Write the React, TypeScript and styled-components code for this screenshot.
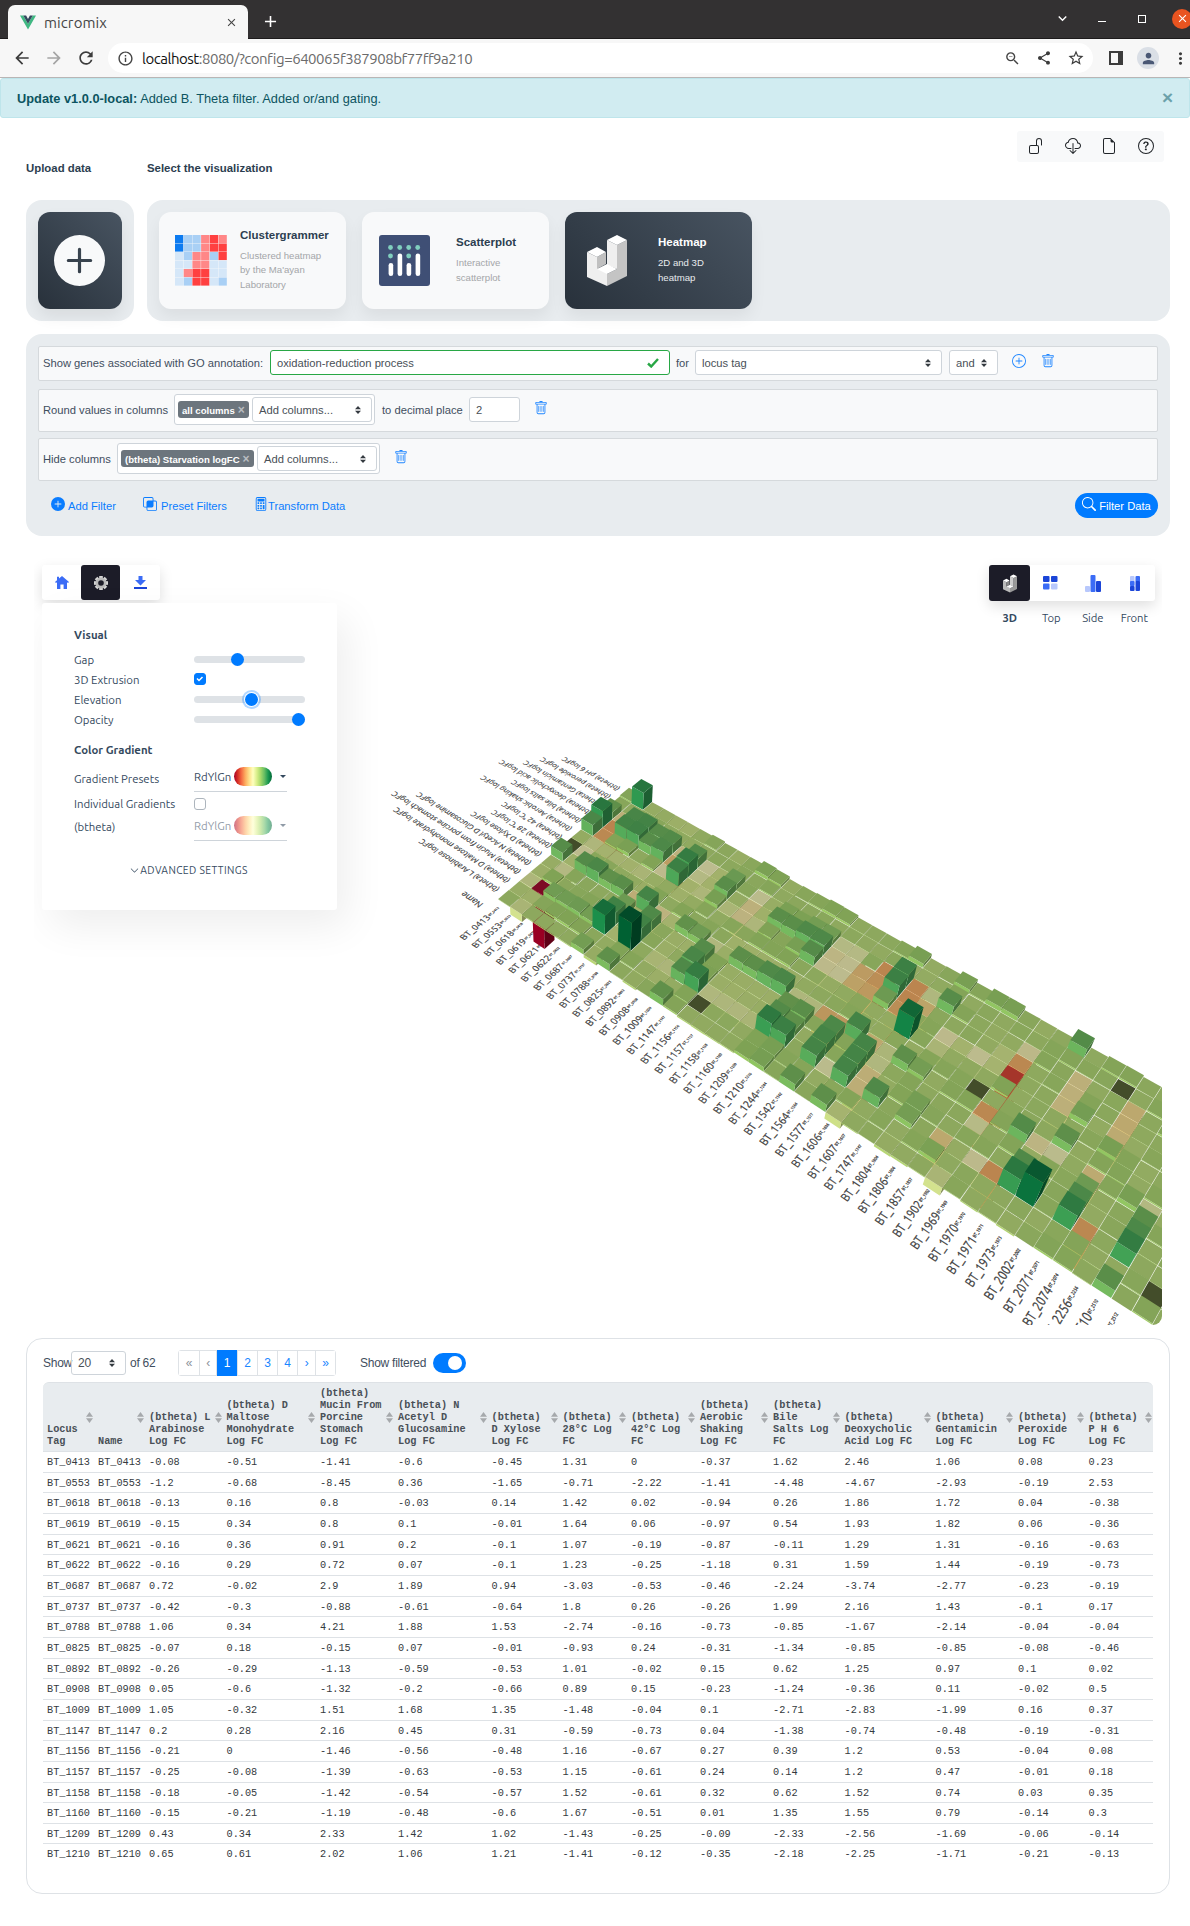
import React from 'react';
import styled, { createGlobalStyle, css } from 'styled-components';
import {
  BsPlusCircleFill, BsPlusCircle, BsUnlock, BsCloudDownload, BsFileEarmark, BsQuestionCircle,
  BsIntersect, BsCalculator, BsSearch, BsTrash, BsChevronDown,
} from 'react-icons/bs';
import {
  MdArrowBack, MdArrowForward, MdRefresh, MdInfoOutline, MdZoomOut, MdShare, MdStarOutline, MdPerson,
  MdMoreVert, MdAdd, MdClose, MdKeyboardArrowDown,
} from 'react-icons/md';

const sans = '"Liberation Sans", Arial, sans-serif';
const ui = 'Ubuntu, "Noto Sans", sans-serif';
const mono = '"Liberation Mono", monospace';

const GlobalStyle = createGlobalStyle`
  * { box-sizing: border-box; }
  body { margin: 0; background: #fff; font-family: ${sans}; font-size: 11.2px; color: #2c3e50; }
`;

const Page = styled.div`
  width: 1190px;
  height: 1926px;
  overflow: hidden;
`;

/* ---------- browser window ---------- */

const TabStrip = styled.div`
  height: 39px;
  background: #333132;
  border-bottom: 1px solid #1d1b1c;
  display: flex;
  align-items: flex-end;
  padding-left: 8px;
`;

const Tab = styled.div`
  width: 240px;
  height: 34px;
  margin-bottom: -1px;
  background: #f7f7f7;
  border-radius: 7px 7px 0 0;
  display: flex;
  align-items: center;
  padding: 0 10px 0 12px;
  color: #454545;
`;

const TabTitle = styled.span`
  font: 15px ${ui};
  letter-spacing: 0.1px;
  margin-left: 8px;
  flex: 1;
`;

const NewTab = styled.div`
  width: 24px;
  height: 34px;
  margin-left: 10px;
  color: #fff;
  display: flex;
  align-items: center;
  justify-content: center;
`;

const WindowButtons = styled.div`
  margin-left: auto;
  height: 39px;
  display: flex;
  align-items: center;
  color: #fff;
`;

const Minimize = styled.i`
  width: 8px;
  height: 1px;
  background: #fff;
  margin: 5px 0 0 27px;
`;

const Maximize = styled.i`
  width: 8px;
  height: 8px;
  border: 1px solid #fff;
  margin-left: 32px;
`;

const CloseWindow = styled.div`
  width: 20px;
  height: 20px;
  border-radius: 50%;
  background: #e95420;
  margin: 0 -2px 0 26px;
  display: flex;
  align-items: center;
  justify-content: center;
`;

const Toolbar = styled.div`
  height: 39px;
  background: #f7f7f7;
  border-bottom: 1px solid #b9b5b5;
  display: flex;
  align-items: center;
  color: #3c3c3c;
  padding-left: 12px;
`;

const NavIcon = styled.span<{ $muted?: boolean; $gap?: number }>`
  display: flex;
  margin-left: ${p => p.$gap ?? 0}px;
  color: ${p => (p.$muted ? '#a5a5a5' : '#3c3c3c')};
`;

const Omnibox = styled.div`
  width: 989px;
  height: 30px;
  margin-left: 12px;
  border-radius: 15px;
  background: #fff;
  display: flex;
  align-items: center;
  padding: 0 8px 0 9px;
  color: #444;
`;

const Url = styled.span`
  font: 15px ${ui};
  letter-spacing: -0.48px;
  color: #6b6b6b;
  margin-left: 8px;
  flex: 1;
  b { font-weight: 400; color: #111; }
`;

const Avatar = styled.div`
  width: 22px;
  height: 22px;
  border-radius: 50%;
  background: #dadfe6;
  color: #4a5875;
  display: flex;
  align-items: center;
  justify-content: center;
  margin-left: 14px;
`;

/* ---------- notice and header ---------- */

const Alert = styled.div`
  height: 40px;
  background: #d1ecf1;
  border: 1px solid #bee5eb;
  border-radius: 3px;
  color: #0c5460;
  font-size: 12.8px;
  display: flex;
  align-items: center;
  padding: 0 16px 0 16px;
  b { margin-right: 3px; }
`;

const Dismiss = styled.span`
  margin-left: auto;
  font-size: 19px;
  font-weight: 700;
  color: #6ba1aa;
`;

const Header = styled.div`
  display: grid;
  grid-template-columns: 121px 1fr auto;
  padding: 13px 26px 0;
  height: 82px;
`;

const HeaderLabel = styled.div`
  font-weight: 700;
  font-size: 11.4px;
  padding-top: 31px;
`;

const IconBar = styled.div`
  width: 147px;
  height: 31px;
  background: #f8f9fa;
  border-radius: 3px;
  display: flex;
  align-items: center;
  justify-content: space-between;
  color: #212529;
  padding: 0 10px 2px 11px;
`;

const Panels = styled.div`
  display: flex;
  gap: 13px;
  padding: 0 20px 0 26px;
`;

const Panel = styled.div<{ $w: number }>`
  width: ${p => p.$w}px;
  height: 121px;
  border-radius: 16px;
  background: #e8ecef;
  display: flex;
  gap: 16px;
  padding: 12px;
`;

const dark = css`
  background: linear-gradient(45deg, #28313b 0%, #485461 100%);
  color: #f8f9fa;
`;

const UploadButton = styled.div`
  ${dark}
  width: 84px;
  height: 97px;
  border-radius: 12px;
  box-shadow: 0 8px 16px rgba(0, 0, 0, 0.07);
  display: flex;
  align-items: center;
  justify-content: center;
  padding-right: 2px;
`;

const Card = styled.div<{ $dark?: boolean }>`
  width: 187px;
  height: 97px;
  border-radius: 12px;
  background: #f8f9fa;
  box-shadow: 0 8px 16px rgba(0, 0, 0, 0.06);
  display: grid;
  grid-template-columns: 52px 1fr;
  align-items: center;
  padding: 0 0 0 16px;
  ${p => p.$dark && dark}
`;

const CardText = styled.div<{ $pad: number }>`
  padding-left: ${p => p.$pad}px;
`;

const CardTitle = styled.div<{ $dark?: boolean }>`
  font-weight: 700;
  font-size: 11.5px;
  margin: 0 0 8px;
  color: ${p => (p.$dark ? '#fff' : '#2c3e50')};
`;

const CardSub = styled.div<{ $dark?: boolean }>`
  font-size: 9.6px;
  line-height: 14.4px;
  color: ${p => (p.$dark ? '#e8ebee' : '#a4a6a9')};
`;

/* ---------- filters ---------- */

const Filters = styled.div`
  margin: 13px 20px 0 26px;
  height: 202px;
  border-radius: 16px;
  background: #e8ecef;
  padding: 12px 12px 0;
`;

const FilterRow = styled.div<{ $h: number; $gap: number }>`
  height: ${p => p.$h}px;
  margin-bottom: ${p => p.$gap}px;
  background: #f8f9fa;
  border: 1px solid #d5d9dc;
  border-radius: 2px;
  display: flex;
  align-items: center;
  padding: 0 0 2px 4px;
  font-size: 11.2px;
  color: #3f4e5e;
`;

const Field = styled.div<{ $w: number; $ml?: number; $ok?: boolean }>`
  width: ${p => p.$w}px;
  height: 25px;
  margin-left: ${p => p.$ml ?? 0}px;
  border: 1px solid ${p => (p.$ok ? '#28a745' : '#ced4da')};
  border-radius: 3px;
  background: #fff;
  color: #495057;
  display: flex;
  align-items: center;
  justify-content: space-between;
  padding: 0 10px 0 6px;
`;

const TagBox = styled.div<{ $w: number; $ml: number }>`
  width: ${p => p.$w}px;
  height: 31px;
  margin-left: ${p => p.$ml}px;
  border: 1px solid #ced4da;
  border-radius: 3px;
  background: #fff;
  display: flex;
  align-items: center;
  justify-content: space-between;
  padding: 0 2px 0 3px;
`;

const Tag = styled.span`
  height: 17px;
  border-radius: 3px;
  background: #6c757d;
  color: #fff;
  font-weight: 700;
  font-size: 9.6px;
  display: flex;
  align-items: center;
  gap: 3px;
  padding: 1px 4px 0;
  white-space: nowrap;
  i { font-style: normal; font-size: 12px; line-height: 8px; color: #b9bdc1; margin-top: -1px; }
`;

const Label = styled.span<{ $w: number; $ml?: number }>`
  width: ${p => p.$w}px;
  margin-left: ${p => p.$ml ?? 0}px;
  white-space: nowrap;
`;

const BlueIcon = styled.span<{ $ml: number }>`
  margin: 0 0 3px ${p => p.$ml}px;
  display: flex;
  color: #1f86ff;
`;

const Actions = styled.div`
  display: flex;
  align-items: center;
  height: 25px;
  margin-top: 12px;
  padding-left: 13px;
  color: #0a7cff;
`;

const Action = styled.div<{ $w: number; $gap: number }>`
  width: ${p => p.$w}px;
  display: flex;
  align-items: center;
  gap: ${p => p.$gap}px;
  svg { margin-bottom: 3px; }
`;

const FilterButton = styled.div`
  margin-left: auto;
  width: 83px;
  height: 25px;
  border-radius: 13px;
  background: #007bff;
  color: #fff;
  display: flex;
  align-items: center;
  justify-content: center;
  gap: 3px;
  svg { margin-bottom: 3px; }
`;

/* ---------- 3D view ---------- */

const View = styled.div`
  position: relative;
  margin: 14px 28px 0 34px;
  height: 775px;
  overflow: hidden;
  border-radius: 0 0 9px 0;
`;

const Scene = styled.svg`
  position: absolute;
  inset: 0;
  display: block;
`;

const ViewTop = styled.div`
  position: relative;
  display: flex;
  justify-content: space-between;
  padding: 15px 7px 0 8px;
`;

const ButtonGroup = styled.div`
  display: flex;
  background: #fff;
  border-radius: 3px;
  box-shadow: 0 5px 14px rgba(0, 0, 0, 0.13);
`;

const GroupButton = styled.div<{ $w: number; $h: number; $on?: boolean }>`
  width: ${p => p.$w}px;
  height: ${p => p.$h}px;
  border-radius: 3px;
  background: ${p => (p.$on ? '#1c1c28' : 'transparent')};
  display: flex;
  align-items: center;
  justify-content: center;
`;

const ViewNames = styled.div`
  display: flex;
  margin-top: 10px;
  font: 11.3px ${ui};
  letter-spacing: -0.1px;
  color: #34495e;
  span, b { width: 41.5px; text-align: center; }
`;

const Settings = styled.div`
  position: relative;
  width: 295px;
  height: 307px;
  margin: -21px 0 0 8px;
  background: #fff;
  border-radius: 3px;
  box-shadow: 10px 16px 40px rgba(0, 0, 0, 0.07);
  padding: 22px 32px 0;
  font: 11.4px ${ui};
  letter-spacing: 0;
  color: #34495e;
`;

const SettingsTitle = styled.div<{ $mt?: number }>`
  font-weight: 700;
  height: 20px;
  line-height: 20px;
  margin: ${p => p.$mt ?? 0}px 0 4px;
`;

const SettingsRow = styled.div<{ $h: number; $lift?: number }>`
  height: ${p => p.$h}px;
  display: grid;
  grid-template-columns: 120px 111px;
  align-items: center;
  > :first-child { padding-bottom: ${p => p.$lift ?? 0}px; }
`;

const Track = styled.div`
  position: relative;
  height: 7px;
  border-radius: 4px;
  background: #dee2e6;
`;

const Thumb = styled.i<{ $x: number; $focus?: boolean }>`
  position: absolute;
  top: -3px;
  left: ${p => p.$x}px;
  width: 13px;
  height: 13px;
  border-radius: 50%;
  background: #007bff;
  ${p => p.$focus && 'box-shadow: 0 0 0 1px #fff, 0 0 0 3px rgba(0,123,255,.3);'}
`;

const Check = styled.div<{ $on?: boolean }>`
  width: 12px;
  height: 12px;
  border-radius: 3px;
  border: 1px solid ${p => (p.$on ? '#007bff' : '#adb5bd')};
  background: ${p => (p.$on ? '#007bff' : '#fff')};
  display: flex;
`;

const Gradient = styled.div<{ $dim?: boolean }>`
  width: 93px;
  height: 25px;
  border-bottom: 1px solid #ced4da;
  display: flex;
  align-items: center;
  padding-bottom: 4px;
  > * { opacity: ${p => (p.$dim ? 0.55 : 1)}; }
`;

const Pill = styled.i`
  width: 38px;
  height: 19px;
  border-radius: 10px;
  margin: 0 8px 0 3px;
  background: linear-gradient(90deg, #a50026, #d73027, #f46d43, #fdae61, #fee08b, #ffffbf, #d9ef8b, #a6d96a, #66bd63, #1a9850, #006837);
`;

const Caret = styled.i`
  border: 3px solid transparent;
  border-top-color: #34495e;
  border-bottom: 0;
`;

const Advanced = styled.div`
  display: flex;
  align-items: center;
  justify-content: center;
  gap: 1px;
  margin: 21px 0 0 -1px;
  font-size: 10.3px;
  letter-spacing: 0.4px;
`;

/* ---------- table ---------- */

const TablePanel = styled.div`
  margin: 13px 20px 0 26px;
  height: 556px;
  border: 1px solid #dee2e6;
  border-radius: 16px;
  padding: 11px 16px 0;
`;

const TableTools = styled.div`
  display: flex;
  align-items: center;
  height: 26px;
  margin-bottom: 6px;
  font-size: 12px;
  letter-spacing: -0.25px;
  color: #3f4e5e;
`;

const PageSize = styled.div`
  width: 55px;
  height: 24px;
  border: 1px solid #ced4da;
  border-radius: 3px;
  display: flex;
  align-items: center;
  justify-content: space-between;
  padding: 0 10px 0 6px;
  color: #495057;
`;

const Pager = styled.div`
  display: flex;
  margin-left: 24px;
  border: 1px solid #dee2e6;
  border-radius: 3px;
  height: 26px;
`;

const PageItem = styled.span<{ $w: number; $on?: boolean; $muted?: boolean }>`
  width: ${p => p.$w}px;
  display: flex;
  align-items: center;
  justify-content: center;
  color: ${p => (p.$on ? '#fff' : p.$muted ? '#8a9299' : '#1a86ff')};
  background: ${p => (p.$on ? '#007bff' : '#fff')};
  margin: ${p => (p.$on ? '-1px 0' : '0')};
  & + & { border-left: 1px solid ${p => (p.$on ? '#007bff' : '#dee2e6')}; }
`;

const Toggle = styled.div`
  width: 33px;
  height: 20px;
  border-radius: 10px;
  background: #007bff;
  margin-left: 9px;
  padding: 3px 3px 3px 15px;
  i { display: block; width: 14px; height: 14px; border-radius: 50%; background: #fff; }
`;

const COLS = '51px 51px 77.5px 93.5px 78px 93.5px 71px 68.5px 69px 73px 71.5px 91px 82.5px 70.5px 1fr';

const Grid = styled.div<{ $head?: boolean }>`
  display: grid;
  grid-template-columns: ${COLS};
  font: 10.24px ${mono};
  color: #343a40;
  ${p => p.$head
    ? css`
        height: 70px;
        background: #e8ecef;
        border: solid #dee2e6;
        border-width: 1px 0;
        border-radius: 6px 6px 0 0;
        font-weight: 700;
        line-height: 12px;
        color: #495057;
        padding-bottom: 2px;
      `
    : css`
        height: 20.66px;
        border-bottom: 1px solid #dee2e6;
        line-height: 20px;
        &:last-child { border: 0; }
      `}
`;

const Head = styled.div`
  display: flex;
  align-items: flex-end;
  justify-content: space-between;
  padding: 0 1px 2px 4px;
  span { white-space: pre; }
`;

const SortMark = styled.svg`
  align-self: flex-start;
  margin-top: 29px;
  flex: none;
`;

const Cell = styled.div`
  padding-left: 4px;
`;

/* ---------- data ---------- */

const HEADERS = [
  'Locus\nTag', 'Name', '(btheta) L\nArabinose\nLog FC', '(btheta) D\nMaltose\nMonohydrate\nLog FC',
  '(btheta)\nMucin From\nPorcine\nStomach\nLog FC', '(btheta) N\nAcetyl D\nGlucosamine\nLog FC', '(btheta)\nD Xylose\nLog FC',
  '(btheta)\n28°C Log\nFC', '(btheta)\n42°C Log\nFC', '(btheta)\nAerobic\nShaking\nLog FC', '(btheta)\nBile\nSalts Log\nFC',
  '(btheta)\nDeoxycholic\nAcid Log FC', '(btheta)\nGentamicin\nLog FC', '(btheta)\nPeroxide\nLog FC', '(btheta)\nP H 6\nLog FC',
];

const DATA: [string, number[]][] = [
  ['BT_0413', [-0.08, -0.51, -1.41, -0.6, -0.45, 1.31, 0, -0.37, 1.62, 2.46, 1.06, 0.08, 0.23]],
  ['BT_0553', [-1.2, -0.68, -8.45, 0.36, -1.65, -0.71, -2.22, -1.41, -4.48, -4.67, -2.93, -0.19, 2.53]],
  ['BT_0618', [-0.13, 0.16, 0.8, -0.03, 0.14, 1.42, 0.02, -0.94, 0.26, 1.86, 1.72, 0.04, -0.38]],
  ['BT_0619', [-0.15, 0.34, 0.8, 0.1, -0.01, 1.64, 0.06, -0.97, 0.54, 1.93, 1.82, 0.06, -0.36]],
  ['BT_0621', [-0.16, 0.36, 0.91, 0.2, -0.1, 1.07, -0.19, -0.87, -0.11, 1.29, 1.31, -0.16, -0.63]],
  ['BT_0622', [-0.16, 0.29, 0.72, 0.07, -0.1, 1.23, -0.25, -1.18, 0.31, 1.59, 1.44, -0.19, -0.73]],
  ['BT_0687', [0.72, -0.02, 2.9, 1.89, 0.94, -3.03, -0.53, -0.46, -2.24, -3.74, -2.77, -0.23, -0.19]],
  ['BT_0737', [-0.42, -0.3, -0.88, -0.61, -0.64, 1.8, 0.26, -0.26, 1.99, 2.16, 1.43, -0.1, 0.17]],
  ['BT_0788', [1.06, 0.34, 4.21, 1.88, 1.53, -2.74, -0.16, -0.73, -0.85, -1.67, -2.14, -0.04, -0.04]],
  ['BT_0825', [-0.07, 0.18, -0.15, 0.07, -0.01, -0.93, 0.24, -0.31, -1.34, -0.85, -0.85, -0.08, -0.46]],
  ['BT_0892', [-0.26, -0.29, -1.13, -0.59, -0.53, 1.01, -0.02, 0.15, 0.62, 1.25, 0.97, 0.1, 0.02]],
  ['BT_0908', [0.05, -0.6, -1.32, -0.2, -0.66, 0.89, 0.15, -0.23, -1.24, -0.36, 0.11, -0.02, 0.5]],
  ['BT_1009', [1.05, -0.32, 1.51, 1.68, 1.35, -1.48, -0.04, 0.1, -2.71, -2.83, -1.99, 0.16, 0.37]],
  ['BT_1147', [0.2, 0.28, 2.16, 0.45, 0.31, -0.59, -0.73, 0.04, -1.38, -0.74, -0.48, -0.19, -0.31]],
  ['BT_1156', [-0.21, 0, -1.46, -0.56, -0.48, 1.16, -0.67, 0.27, 0.39, 1.2, 0.53, -0.04, 0.08]],
  ['BT_1157', [-0.25, -0.08, -1.39, -0.63, -0.53, 1.15, -0.61, 0.24, 0.14, 1.2, 0.47, -0.01, 0.18]],
  ['BT_1158', [-0.18, -0.05, -1.42, -0.54, -0.57, 1.52, -0.61, 0.32, 0.62, 1.52, 0.74, 0.03, 0.35]],
  ['BT_1160', [-0.15, -0.21, -1.19, -0.48, -0.6, 1.67, -0.51, 0.01, 1.35, 1.55, 0.79, -0.14, 0.3]],
  ['BT_1209', [0.43, 0.34, 2.33, 1.42, 1.02, -1.43, -0.25, -0.09, -2.33, -2.56, -1.69, -0.06, -0.14]],
  ['BT_1210', [0.65, 0.61, 2.02, 1.06, 1.21, -1.41, -0.12, -0.35, -2.18, -2.25, -1.71, -0.21, -0.13]],
];

const MORE_GENES = ['1244', '1542', '1564', '1577', '1606', '1607', '1747', '1804', '1806', '1857', '1902', '1969', '1970', '1971',
  '1973', '2002', '2071', '2074', '2256', '2510', '2512', '2542', '2550', '2553'].map(n => 'BT_' + n);

// Outstanding values of the genes after the first table page: [gene index, condition index, value].
const PEAKS: [number, number, number][] = [
  [22, 10, 2], [22, 9, 2], [22, 8, 0.9], [21, 10, -4.6], [21, 9, -4.3], [21, 8, -3.9], [20, 9, -3.8], [20, 8, -3.6],
  [23, 10, -4.6], [23, 9, -4.6], [23, 8, -4.3], [24, 9, -3.5], [24, 10, -1.5], [24, 7, 3.2], [25, 10, 1.3], [25, 12, 0.6],
  [22, 12, 0.6], [27, 12, 0.6], [28, 12, 0.6], [32, 12, 1.4], [26, 8, -2.3], [26, 7, -1.2], [28, 8, -2.2], [27, 8, -0.9],
  [29, 9, -1], [29, 8, -1], [30, 10, -2.4], [30, 9, -4.5], [30, 8, -6.9], [30, 7, 0.3], [29, 6, 0], [30, 5, -4.5], [30, 4, -1.8],
  [29, 2, -3.3], [29, 1, 0.5], [31, 2, -2.3], [32, 2, -4.6], [30, 0, -1.2], [32, 5, 1.4], [33, 5, -2.6], [33, 3, 1.5],
  [33, 2, 2.4], [34, 2, 3.7], [34, 5, -2], [34, 6, 1.1], [33, 8, -2.9], [33, 9, -2.9], [33, 10, -2.9], [34, 8, 0.7], [35, 11, 0],
  [36, 10, -3.3], [36, 9, -3.3], [36, 8, -3.2], [36, 7, 0.6], [36, 5, -3.2], [36, 4, 0.9], [36, 3, 1.6], [36, 2, 2.3],
  [37, 2, -4.5], [39, 5, -1.6], [39, 4, 1.2], [39, 3, 1.6], [39, 2, 2.2], [39, 0, 1.2], [41, 1, 0], [38, 5, 0.6],
  [25, 2, 1.5], [24, 3, -3], [24, 2, -3], [24, 4, -1.5], [24, 5, -1.3], [23, 5, -3.3], [23, 4, 1.8], [23, 3, 1.8], [23, 2, 1.8],
  [22, 5, 1.8], [20, 5, -4], [21, 5, -4], [25, 5, 1.1], [26, 5, 0.7], [27, 3, 0.7], [27, 2, 0.7], [24, 0, -1], [23, 0, 1.1],
  [21, 0, 1.1], [22, 2, -2], [21, 4, 1.6], [21, 3, 1.8], [21, 2, 1.8],
];

const background = (u: number, v: number) => {
  const s = Math.sin(u * 12.9898 + v * 78.233) * 43758.5453;
  return (s - Math.floor(s)) * 0.6 - 0.36;
};

const GENES = [...DATA.map(d => d[0]), ...MORE_GENES];
const MATRIX = GENES.map((_, u) => Array.from({ length: 13 }, (_, v) => (u < DATA.length ? DATA[u][1][v] : background(u, v))));
PEAKS.forEach(([u, v, value]) => { MATRIX[u][v] = value; });

const CONDITIONS = ['L Arabinose', 'D Maltose monohydrate', 'Mucin from porcine stomach', 'N Acetyl D Glucosamine', 'D Xylose',
  '28 °C', '42 °C', 'Aerobic shaking', 'bile salts', 'deoxycholic acid', 'Gentamicin', 'peroxide', 'pH 6']
  .map(n => `(btheta) ${n} logFC`);

/* ---------- perspective camera ---------- */

const LIFT = -0.00485;
const project = (u: number, v: number, z = 0): [number, number] => {
  const w = 1 - 0.005906 * u + 0.0066 * v + LIFT * z;
  return [
    (498 + 8.768 * u + 14.23 * v + LIFT * 580 * z) / w,
    (899 + 2.317 * u - 3.254 * v + LIFT * 2250 * z) / w,
  ];
};

const points = (...ps: [number, number, number][]) =>
  ps.map(p => project(...p).map(n => n.toFixed(1)).join(',')).join(' ');

const STOPS = ['a50026', 'd73027', 'f46d43', 'fdae61', 'fee08b', 'ffffbf', 'd9ef8b', 'a6d96a', '66bd63', '1a9850', '006837']
  .map(h => [0, 2, 4].map(i => parseInt(h.slice(i, i + 2), 16)));

const shade = (value: number, k: number, add = 0) => {
  const t = Math.max(0, Math.min(0.9999, (value + 8.45) / 12.66)) * 10;
  const i = Math.floor(t);
  const rgb = STOPS[i].map((c, n) => Math.round((c + (STOPS[i + 1][n] - c) * (t - i)) * k + add));
  return `rgb(${rgb.join(',')})`;
};

function Bar({ u, v, value }: { u: number; v: number; value: number }) {
  const a = u + 0.01, b = u + 0.985, c = v + 0.01, d = v + 0.985;
  const hi = Math.max(value, 0), lo = Math.min(value, 0);
  return (
    <g>
      {value !== 0 && (
        <>
          <polygon points={points([b, c, lo], [b, d, lo], [b, d, hi], [b, c, hi])} fill={shade(value, 0.58)} />
          <polygon points={points([a, c, lo], [b, c, lo], [b, c, hi], [a, c, hi])} fill={shade(value, 0.93)} />
        </>
      )}
      <polygon points={points([a, c, hi], [b, c, hi], [b, d, hi], [a, d, hi])}
        fill={value === 0 ? '#434d2a' : shade(value, 0.7, value > 1 ? 2 : 10)} />
    </g>
  );
}

const SceneText = styled.text`
  font-family: ${ui};
  fill: #3c3c3c;
  stroke: #3c3c3c;
  stroke-width: 0.25px;
`;

// Lays a text on the floor: along +v for genes, along -u for conditions.
function FloorText({ u, v, size, turned, children, end }: {
  u: number; v: number; size: number; turned?: boolean; end?: boolean; children: string;
}) {
  const [x, y] = project(u, v);
  const mu = turned ? u - 2.5 : u, mv = turned ? v : v - 1;
  const [ox, oy] = project(mu, mv);
  const [ux, uy] = project(mu + 0.5, mv).map((n, i) => (n - [ox, oy][i]) / 10);
  const [vx, vy] = project(mu, mv + 0.5).map((n, i) => (n - [ox, oy][i]) / 10);
  const m = turned ? [-ux, -uy, vx, vy, x, y] : [vx, vy, ux, uy, x, y];
  return (
    <SceneText transform={`matrix(${m.map(n => n.toFixed(4)).join(' ')})`} fontSize={size} y={size * 0.36}
      textAnchor={end ? 'end' : 'start'}>
      {children}
    </SceneText>
  );
}

function Heatmap() {
  const bars: React.ReactElement[] = [];
  for (let v = 12; v >= 0; v--) {
    MATRIX.forEach((row, u) => bars.push(<Bar key={u + '-' + v} u={u} v={v} value={row[v]} />));
  }
  return (
    <Scene width="1128" height="775" viewBox="34 550 1128 775">
      <FloorText u={-0.4} v={-1.1} size={13} turned>Name</FloorText>
      {CONDITIONS.map((c, v) => <FloorText key={c} u={-0.5} v={v + 0.5} size={11.5} turned>{c}</FloorText>)}
      {GENES.slice(0, 41).map((gene, u) => (
        <g key={gene}>
          <FloorText u={u + 0.5} v={-0.5} size={4.4} end>{gene}</FloorText>
          <FloorText u={u + 0.5} v={-1.4} size={12.2} end>{gene}</FloorText>
        </g>
      ))}
      {bars}
    </Scene>
  );
}

/* ---------- drawings ---------- */

const VueLogo = () => (
  <svg width="16" height="15" viewBox="0 0 16 14">
    <path d="M0 0h3.2L8 8.3 12.8 0H16L8 14z" fill="#41b883" />
    <path d="M3.2 0h2.9L8 3.4 9.9 0h2.9L8 8.3z" fill="#34495e" />
  </svg>
);

const CLUSTER = ['BbbrRr', 'BbbrRR', 'wbrrbR', 'wwrrww', 'wrRRww', 'wbRRwb'];
const CLUSTER_FILL: Record<string, string> = { B: '#0d7bf0', b: '#a9d0f5', w: '#d5e7f8', r: '#ff8787', R: '#ff4040' };

const ClusterLogo = () => (
  <svg width="52" height="51" viewBox="0 0 52 51">
    {CLUSTER.flatMap((row, y) => [...row].map((k, x) => (
      <rect key={`${x}-${y}`} x={x * 8.7} y={y * 8.5} width="8.3" height="8.1" fill={CLUSTER_FILL[k]} />
    )))}
  </svg>
);

const PlotLogo = () => (
  <svg width="52" height="51" viewBox="0 0 52 51">
    <rect x="1" width="51" height="51" rx="3" fill="#3f4f75" />
    {[[12.5, 12.5], [21.7, 12.5], [30.7, 12.5], [39.7, 12.5], [12.5, 21], [30.7, 21]].map(([x, y]) => (
      <circle key={`${x}-${y}`} cx={x} cy={y} r="2.4" fill="#80cfbe" />
    ))}
    {[[10.6, 28], [19.6, 18.5], [28.6, 28], [37.6, 18.5]].map(([x, y]) => (
      <rect key={x} x={x} y={y} width="4.6" height={41 - y} rx="2.3" fill="#fff" />
    ))}
  </svg>
);

const CubeLogo = ({ w, h, grey }: { w: number; h: number; grey?: boolean }) => (
  <svg width={w} height={h} viewBox="0 0 40 51">
    <path d="M0 17v25l20 9V38l-10-5V22z" fill={grey ? '#bbb' : '#efefef'} />
    <path d="M20 51l20-10V5l-10 5v24l-10 5z" fill={grey ? '#999' : '#c4c4c4'} />
    <path d="M20 5l10 5v24l-10-4z" fill={grey ? '#ccc' : '#efefef'} />
    <path d="M10 22l9-5v12l-9 5z" fill={grey ? '#888' : '#c0c0c0'} />
    <path d="M20 5l10-5 10 5-10 5zM0 17l10-5 9 5-9 5zM10 34l10-5 10 5-10 5z" fill="#fff" />
  </svg>
);

const UpDown = () => (
  <svg width="6" height="8" viewBox="0 0 6 8"><path d="M3 0l3 3.3H0zM3 8l3-3.3H0z" fill="#343a40" /></svg>
);

const Sort = () => (
  <SortMark width="7" height="11" viewBox="0 0 7 11"><path d="M3.5 0L7 4.8H0zM3.5 11L7 6.2H0z" fill="#a6a9ac" /></SortMark>
);

const Blocks = ({ w, h, rects }: { w: number; h: number; rects: [number, number, number, number, string][] }) => (
  <svg width={w} height={h}>
    {rects.map((r, i) => <rect key={i} x={r[0]} y={r[1]} width={r[2]} height={r[3]} fill={r[4]} rx="1" />)}
  </svg>
);

const PAGES: [string, number][] = [['«', 20], ['‹', 17], ['1', 21], ['2', 20], ['3', 20], ['4', 20], ['›', 18], ['»', 20]];

export default function App() {
  return (
    <Page>
      <GlobalStyle />
      <TabStrip>
        <Tab>
          <VueLogo />
          <TabTitle>micromix</TabTitle>
          <MdClose size={13} />
        </Tab>
        <NewTab><MdAdd size={19} /></NewTab>
        <WindowButtons>
          <MdKeyboardArrowDown size={17} />
          <Minimize />
          <Maximize />
          <CloseWindow><MdClose size={13} /></CloseWindow>
        </WindowButtons>
      </TabStrip>
      <Toolbar>
        <NavIcon><MdArrowBack size={20} /></NavIcon>
        <NavIcon $gap={12} $muted><MdArrowForward size={20} /></NavIcon>
        <NavIcon $gap={12}><MdRefresh size={20} /></NavIcon>
        <Omnibox>
          <MdInfoOutline size={17} />
          <Url><b>localhost</b>:8080/?config=640065f387908bf77ff9a210</Url>
          <MdZoomOut size={17} />
          <NavIcon $gap={15}><MdShare size={16} /></NavIcon>
          <NavIcon $gap={15}><MdStarOutline size={18} /></NavIcon>
        </Omnibox>
        <NavIcon $gap={16}>
          <svg width="14" height="14"><rect x="1" y="1" width="12" height="12" fill="none" stroke="#3c3c3c" strokeWidth="2" /><rect x="9" width="5" height="14" fill="#3c3c3c" /></svg>
        </NavIcon>
        <Avatar><MdPerson size={17} /></Avatar>
        <NavIcon $gap={12}><MdMoreVert size={19} /></NavIcon>
      </Toolbar>

      <Alert><b>Update v1.0.0-local:</b>Added B. Theta filter. Added or/and gating.<Dismiss>×</Dismiss></Alert>

      <Header>
        <HeaderLabel>Upload data</HeaderLabel>
        <HeaderLabel>Select the visualization</HeaderLabel>
        <IconBar>
          <BsUnlock size={16} /><BsCloudDownload size={16} /><BsFileEarmark size={16} /><BsQuestionCircle size={16} />
        </IconBar>
      </Header>

      <Panels>
        <Panel $w={108}><UploadButton><BsPlusCircleFill size={51} /></UploadButton></Panel>
        <Panel $w={1023}>
          <Card>
            <ClusterLogo />
            <CardText $pad={13}>
              <CardTitle>Clustergrammer</CardTitle>
              <CardSub>Clustered heatmap<br />by the Ma'ayan<br />Laboratory</CardSub>
            </CardText>
          </Card>
          <Card>
            <PlotLogo />
            <CardText $pad={26}>
              <CardTitle>Scatterplot</CardTitle>
              <CardSub>Interactive<br />scatterplot</CardSub>
            </CardText>
          </Card>
          <Card $dark>
            <CubeLogo w={52} h={51} />
            <CardText $pad={25}>
              <CardTitle $dark>Heatmap</CardTitle>
              <CardSub $dark>2D and 3D<br />heatmap</CardSub>
            </CardText>
          </Card>
        </Panel>
      </Panels>

      <Filters>
        <FilterRow $h={35} $gap={8}>
          <Label $w={227}>Show genes associated with GO annotation:</Label>
          <Field $w={400} $ok>
            oxidation-reduction process
            <svg width="12" height="10" viewBox="0 0 12 10"><path d="M1 5.5l3.2 3L11 1" fill="none" stroke="#28a745" strokeWidth="2.4" /></svg>
          </Field>
          <Label $w={19} $ml={6}>for</Label>
          <Field $w={247}>locus tag<UpDown /></Field>
          <Field $w={49} $ml={7}>and<UpDown /></Field>
          <BlueIcon $ml={14}><BsPlusCircle size={14} /></BlueIcon>
          <BlueIcon $ml={15}><BsTrash size={14} /></BlueIcon>
        </FilterRow>
        <FilterRow $h={43} $gap={6}>
          <Label $w={125}>Round values in columns</Label>
          <TagBox $ml={6} $w={201}><Tag>all columns<i>×</i></Tag><Field $w={120}>Add columns...<UpDown /></Field></TagBox>
          <Label $ml={7} $w={81}>to decimal place</Label>
          <Field $ml={6} $w={51}>2</Field>
          <BlueIcon $ml={14}><BsTrash size={14} /></BlueIcon>
        </FilterRow>
        <FilterRow $h={43} $gap={0}>
          <Label $w={68}>Hide columns</Label>
          <TagBox $ml={6} $w={263}><Tag>(btheta) Starvation logFC<i>×</i></Tag><Field $w={120}>Add columns...<UpDown /></Field></TagBox>
          <BlueIcon $ml={14}><BsTrash size={14} /></BlueIcon>
        </FilterRow>
        <Actions>
          <Action $w={92} $gap={3}><BsPlusCircleFill size={14} />Add Filter</Action>
          <Action $w={111} $gap={4}><BsIntersect size={14} />Preset Filters</Action>
          <Action $w={100} $gap={0}><BsCalculator size={14} />Transform Data</Action>
          <FilterButton><BsSearch size={14} />Filter Data</FilterButton>
        </Actions>
      </Filters>

      <View>
        <Heatmap />
        <ViewTop>
          <div>
            <ButtonGroup>
              <GroupButton $w={39} $h={35}>
                <svg width="14" height="13" viewBox="0 0 14 13"><path d="M7 0l7 6-1 1-1-.8V13H8.6V8.5H5.4V13H2V6.200L1 7 0 6l2-1.700V.8h2v1.700z" fill="#3b6cf6" /></svg>
              </GroupButton>
              <GroupButton $w={39} $h={35} $on>
                <svg width="14" height="14" viewBox="-7 -7 14 14">
                  {[0, 45, 90, 135].map(a => <rect key={a} x="-1.8" y="-7" width="3.600" height="14" fill="#d6d6d6" transform={`rotate(${a})`} />)}
                  <circle r="5.400" fill="#b9b9b9" /><circle r="2.800" fill="#1c1c28" />
                </svg>
              </GroupButton>
              <GroupButton $w={40} $h={35}>
                <svg width="13" height="13"><path d="M4.500 0h4v4H12L6.500 9.500 1 4h3.500z" fill="#3b6cf6" /><rect y="11" width="13" height="2" fill="#1b45d8" /></svg>
              </GroupButton>
            </ButtonGroup>
          </div>
          <div>
            <ButtonGroup>
              <GroupButton $w={41} $h={36} $on><CubeLogo w={14} h={19} grey /></GroupButton>
              <GroupButton $w={41} $h={36}>
                <Blocks w={15} h={14} rects={[[0, 0, 6.5, 6, '#1b45d8'], [8, 0, 6.5, 6, '#1b45d8'], [0, 7.5, 6.5, 6, '#3b6cf6'], [8, 7.5, 6.5, 6, '#b8c8fc']]} />
              </GroupButton>
              <GroupButton $w={43} $h={36}>
                <Blocks w={16} h={17} rects={[[0, 11, 5, 6, '#b8c8fc'], [5.5, 0, 5, 17, '#3b6cf6'], [11, 6, 5, 11, '#1b45d8']]} />
              </GroupButton>
              <GroupButton $w={41} $h={36}>
                <Blocks w={10} h={15} rects={[[0, 0, 4.5, 15, '#b8c8fc'], [0, 5, 4.5, 5, '#3b6cf6'], [0, 10, 4.5, 5, '#1b45d8'], [5.5, 0, 4.5, 6, '#3b6cf6'], [5.5, 5, 4.5, 10, '#1b45d8']]} />
              </GroupButton>
            </ButtonGroup>
            <ViewNames><b>3D</b><span>Top</span><span>Side</span><span>Front</span></ViewNames>
          </div>
        </ViewTop>
        <Settings>
          <SettingsTitle>Visual</SettingsTitle>
          <SettingsRow $h={20}><span>Gap</span><Track><Thumb $x={37} /></Track></SettingsRow>
          <SettingsRow $h={20}>
            <span>3D Extrusion</span>
            <Check $on><svg width="10" height="10"><path d="M2 4.500l2 2L7.500 3" fill="none" stroke="#fff" strokeWidth="1.500" /></svg></Check>
          </SettingsRow>
          <SettingsRow $h={20}><span>Elevation</span><Track><Thumb $x={51} $focus /></Track></SettingsRow>
          <SettingsRow $h={20}><span>Opacity</span><Track><Thumb $x={98} /></Track></SettingsRow>
          <SettingsTitle $mt={11}>Color Gradient</SettingsTitle>
          <SettingsRow $h={30} $lift={1}><span>Gradient Presets</span><Gradient>RdYlGn<Pill /><Caret /></Gradient></SettingsRow>
          <SettingsRow $h={19} $lift={1}><span>Individual Gradients</span><Check /></SettingsRow>
          <SettingsRow $h={30} $lift={4}><span>(btheta)</span><Gradient $dim><span>RdYlGn</span><Pill /><Caret /></Gradient></SettingsRow>
          <Advanced><BsChevronDown size={9} />ADVANCED SETTINGS</Advanced>
        </Settings>
      </View>

      <TablePanel>
        <TableTools>
          <Label $w={28}>Show</Label><PageSize>20<UpDown /></PageSize>
          <Label $ml={4} $w={24}>of 62</Label>
          <Pager>
            {PAGES.map(([t, w], i) => <PageItem key={t} $w={w} $on={i === 2} $muted={i < 2}>{t}</PageItem>)}
          </Pager>
          <Label $ml={24} $w={64}>Show filtered</Label>
          <Toggle><i /></Toggle>
        </TableTools>
        <Grid $head>{HEADERS.map(h => <Head key={h}><span>{h}</span><Sort /></Head>)}</Grid>
        <div>
          {DATA.map(([gene, values]) => (
            <Grid key={gene}>
              <Cell>{gene}</Cell><Cell>{gene}</Cell>
              {values.map((n, i) => <Cell key={i}>{n}</Cell>)}
            </Grid>
          ))}
        </div>
      </TablePanel>
    </Page>
  );
}
